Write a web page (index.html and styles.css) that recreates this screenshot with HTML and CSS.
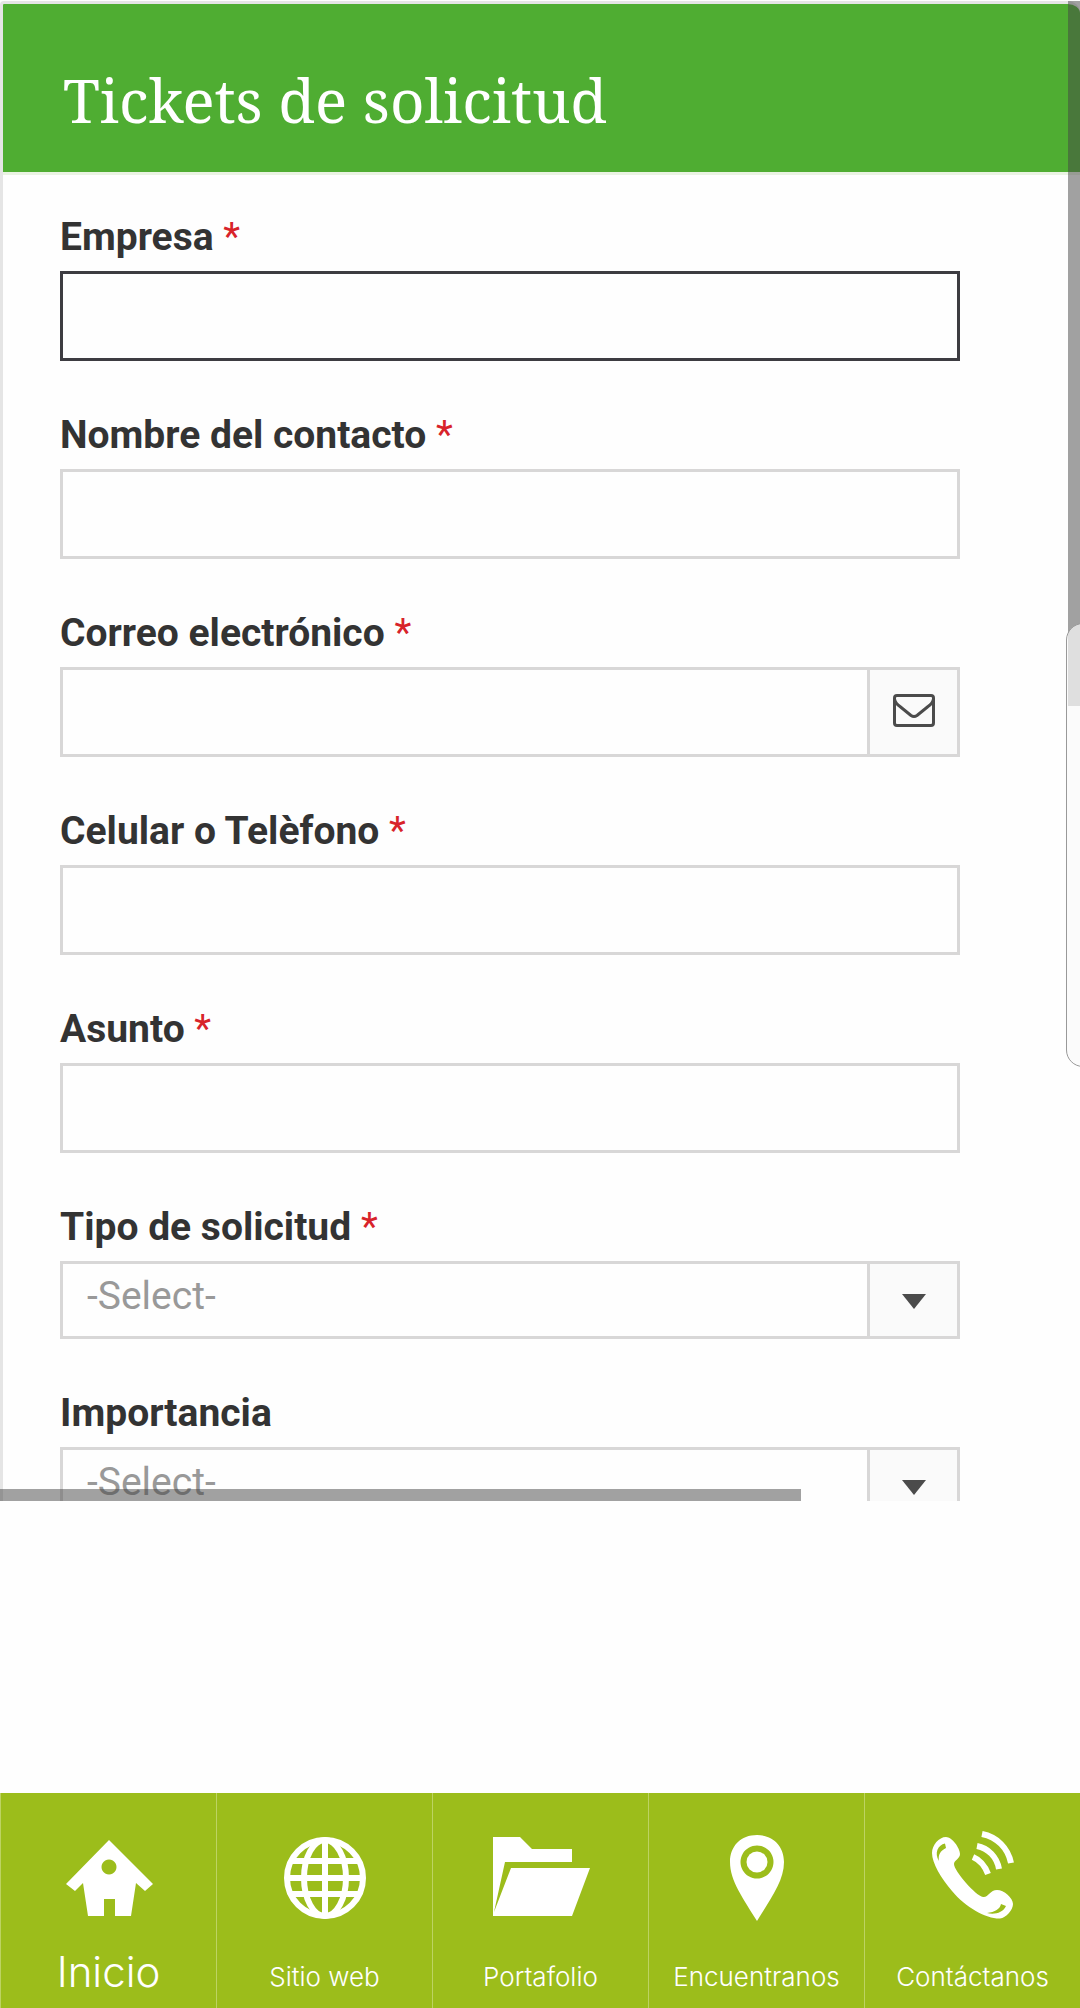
FILE: index.html
```html
<!DOCTYPE html>
<html lang="es">
<head>
    <meta charset="UTF-8">
    <meta name="viewport" content="width=device-width, initial-scale=1">
    <title>Tickets de solicitud</title>
    <link rel="stylesheet" href="styles.css">
</head>
<body>
    <main class="frame">
        <div class="card">
            <div class="header">
                <h1>Tickets de solicitud</h1>
            </div>
            <form class="ticket-form" id="ticketForm">
                <div class="field">
                    <label for="empresa">Empresa <span class="required">*</span></label>
                    <div class="control active"><input type="text" id="empresa"></div>
                </div>
                <div class="field">
                    <label for="nombre">Nombre del contacto <span class="required">*</span></label>
                    <div class="control"><input type="text" id="nombre"></div>
                </div>
                <div class="field">
                    <label for="correo">Correo electrónico <span class="required">*</span></label>
                    <div class="control">
                        <input type="email" id="correo">
                        <span class="addon">
                            <svg class="mail-icon" viewBox="0 0 42 36" aria-hidden="true">
                                <rect x="1.5" y="1.5" width="39" height="30" rx="2.5"/>
                                <path d="M1.5 5C2 8 4 10.500 7 12.500L18 21.500Q21 23.500 24 21.500L35 12.500C38 10.500 40 8 40.500 5"/>
                            </svg>
                        </span>
                    </div>
                </div>
                <div class="field">
                    <label for="telefono">Celular o Telèfono <span class="required">*</span></label>
                    <div class="control"><input type="tel" id="telefono"></div>
                </div>
                <div class="field">
                    <label for="asunto">Asunto <span class="required">*</span></label>
                    <div class="control"><input type="text" id="asunto"></div>
                </div>
                <div class="field">
                    <label for="tipo">Tipo de solicitud <span class="required">*</span></label>
                    <div class="control">
                        <select id="tipo"><option>-Select-</option></select>
                        <span class="addon"><svg class="arrow" viewBox="0 0 24 17" aria-hidden="true"><path d="M0 2h24L12 17z"/></svg></span>
                    </div>
                </div>
                <div class="field">
                    <label for="importancia">Importancia</label>
                    <div class="control">
                        <select id="importancia"><option>-Select-</option></select>
                        <span class="addon"><svg class="arrow" viewBox="0 0 24 17" aria-hidden="true"><path d="M0 2h24L12 17z"/></svg></span>
                    </div>
                </div>
            </form>
        </div>
        <div class="scroll-y"></div>
        <div class="scroll-x"></div>
        <div class="edge-handle"></div>
    </main>

    <nav class="tabs">
        <a href="#" class="current">
            <svg viewBox="0 0 100 90" aria-hidden="true">
                <path fill-rule="evenodd" d="M50 9L94 53L86 60L77 52L72 85H56V68H45V85H29L24 52L16 60L7 53zM50 28.500a7.500 7.500 0 1 0 .01 0z"/>
            </svg>
            <span>Inicio</span>
        </a>
        <a href="#">
            <svg viewBox="0 0 100 90" aria-hidden="true">
                <g class="line">
                    <circle cx="50" cy="47" r="38"/>
                    <ellipse cx="50" cy="47" rx="21" ry="38"/>
                    <path d="M50 9V85M15 30H85M12 47H88M15 63H85"/>
                </g>
            </svg>
            <span>Sitio web</span>
        </a>
        <a href="#">
            <svg viewBox="0 0 100 90" aria-hidden="true">
                <path d="M2 6H29L41 18H81V31H14L3 81L20 37H99L81 85H2z"/>
            </svg>
            <span>Portafolio</span>
        </a>
        <a href="#">
            <svg viewBox="0 0 100 90" aria-hidden="true">
                <path fill-rule="evenodd" d="M50 4C34 4 23 15 23 31C23 50 36 67 50 90C64 67 77 50 77 31C77 15 66 4 50 4zM50 14.500a16.500 16.500 0 1 1-.01 0z"/>
                <circle cx="50" cy="31" r="10.5"/>
            </svg>
            <span>Encuentranos</span>
        </a>
        <a href="#">
            <svg viewBox="0 0 100 90" aria-hidden="true">
                <path fill-rule="evenodd" d="M9 22C9 14 16 6 23 6C29 6 37 17 37 23C37 28 31 29 31 33C31 40 53 65 60 66C65 67 67 59 74 59C81 59 90 67 90 73C90 79 83 87 77 87.500C64 88 43 77 29 60C18 47 9 32 9 22zM22 12.500C15 14 11 22 16 30C15 24 17 20 23 17zM64 82C71 84 80 82 83 75L78 73C77 78 72 81 64 82z"/>
                <g class="line">
                    <path d="M59 3C74 6 85 17 88 32M54 15C65 17 74 26 76 38M50 26C57 29 62 35 65 43"/>
                </g>
            </svg>
            <span>Contáctanos</span>
        </a>
    </nav>
</body>
</html>
```
FILE: styles.css
```css
* {
    box-sizing: border-box;
}
body {
    margin: 0;
    min-height: 100vh;
    display: flex;
    flex-direction: column;
    background: #fefefe;
    color: #333;
    font-family: Roboto, Arial, sans-serif;
}
.frame {
    position: relative;
    height: calc(100vh - 507px);
    padding-top: 1px;
    overflow: hidden;
}
.card {
    border: 3px solid #e5e5e5;
    border-right: 0;
    border-radius: 4px 12px 0 0;
    overflow: hidden;
}
.header {
    padding: 60px 60px 36px;
    background: #4fad32;
    border-bottom: 3px solid #eaf3e3;
}
.header h1 {
    margin: 0;
    color: #fff;
    font-family: "Noto Serif", "DejaVu Serif", serif;
    font-size: 60px;
    font-weight: 400;
    line-height: 72px;
}
.ticket-form {
    padding: 36px 120px 48px 57px;
}
.field {
    margin-bottom: 48px;
}
.field label {
    display: block;
    height: 60px;
    font-size: 39px;
    font-weight: 700;
    line-height: 52px;
}
.required {
    color: #d8232a;
    font-weight: 400;
}
.control {
    display: flex;
    border: 3px solid #d8d7d7;
}
.control.active {
    border-color: #3d3c41;
}
.control input,
.control select {
    flex: 1;
    min-width: 0;
    height: 84px;
    padding: 0 24px;
    border: 0;
    outline: 0;
    background: none;
    color: #999;
    font-family: inherit;
    font-size: 39px;
}
.control select {
    height: 72px;
    padding-bottom: 9px;
    appearance: none;
}
.addon {
    display: flex;
    align-items: center;
    justify-content: center;
    width: 90px;
    border-left: 3px solid #d8d7d7;
    background: #fafafa;
}
.mail-icon {
    width: 42px;
    height: 36px;
    fill: none;
    stroke: #4b4b4b;
    stroke-width: 3;
}
.arrow {
    width: 24px;
    height: 17px;
    fill: #4b4b4b;
}

/* scroll indicators and the side panel handle lie over the form */
.scroll-y,
.scroll-x {
    position: absolute;
    background: rgba(68, 68, 68, 0.5);
}
.scroll-y {
    top: 1px;
    right: 0;
    width: 12px;
    height: 47%;
}
.scroll-x {
    bottom: 0;
    left: 0;
    width: 74.2%;
    height: 12px;
}
.edge-handle {
    position: absolute;
    top: 623px;
    right: -20px;
    width: 34px;
    height: 444px;
    border: 1px solid #999;
    border-radius: 17px;
    background: rgba(250, 250, 250, 0.7);
}

.tabs {
    display: flex;
    margin-top: auto;
    background: #9cbd1b;
}
.tabs a {
    flex: 1 1 0;
    display: flex;
    flex-direction: column;
    align-items: center;
    gap: 28px;
    min-width: 0;
    height: 215px;
    padding-top: 38px;
    border-left: 1px solid #bdd362;
    color: #fff;
    font-family: Inter, "Century Gothic", sans-serif;
    font-size: 26px;
    font-weight: 300;
    line-height: 56px;
    text-decoration: none;
}
.tabs svg {
    width: 100px;
    height: 90px;
    fill: #fff;
}
.tabs .line {
    fill: none;
    stroke: #fff;
    stroke-width: 6;
}
.tabs .current {
    font-size: 42px;
    line-height: 46px;
}
```
